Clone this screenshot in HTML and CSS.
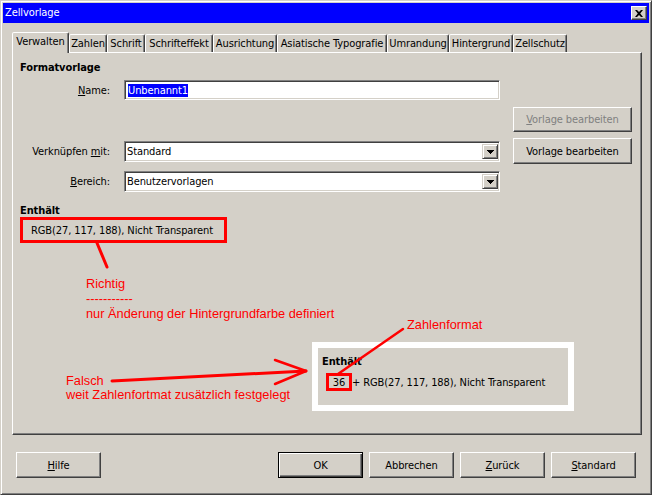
FILE: index.html
```html
<!DOCTYPE html>
<html lang="de">
<head>
<meta charset="utf-8">
<title>Zellvorlage</title>
<link rel="stylesheet" href="styles.css">
</head>
<body>
<div class="window">
  <div class="titlebar">
    <span class="title">Zellvorlage</span>
    <span class="close"><svg width="8" height="7" viewBox="0 0 8 7"><path d="M0 0h2l2 2 2-2h2L5.2 3.5 8 7H6L4 5 2 7H0l2.8-3.5z" fill="#000"/></svg></span>
  </div>
  <div class="tabs">
    <div class="tab active">Verwalten</div>
    <div class="tab">Zahlen</div>
    <div class="tab">Schrift</div>
    <div class="tab">Schrifteffekt</div>
    <div class="tab">Ausrichtung</div>
    <div class="tab">Asiatische Typografie</div>
    <div class="tab">Umrandung</div>
    <div class="tab">Hintergrund</div>
    <div class="tab">Zellschutz</div>
  </div>
  <div class="panel">
    <div class="heading">Formatvorlage</div>
    <div class="form">
      <div class="lbl row-name"><span><u>N</u>ame:</span></div>
      <div class="field row-name"><span class="sel">Unbenannt1</span></div>
      <button class="btn side disabled row-edit1"><u>V</u>orlage bearbeiten</button>
      <div class="lbl row-link"><span>Verknüpfen <u>m</u>it:</span></div>
      <div class="combo row-link"><span class="combo-text">Standard</span><span class="drop"><svg width="7" height="4" viewBox="0 0 7 4"><path d="M0 0h7v1h-1v1h-1v1h-1v1h-1v-1h-1v-1h-1v-1h-1z" fill="#000"/></svg></span></div>
      <button class="btn side row-edit2">Vorla<u>g</u>e bearbeiten</button>
      <div class="lbl row-area"><span><u>B</u>ereich:</span></div>
      <div class="combo row-area"><span class="combo-text">Benutzervorlagen</span><span class="drop"><svg width="7" height="4" viewBox="0 0 7 4"><path d="M0 0h7v1h-1v1h-1v1h-1v1h-1v-1h-1v-1h-1v-1h-1z" fill="#000"/></svg></span></div>
    </div>
    <div class="heading contains-h">Enthält</div>
    <div class="boxed">RGB(27, 117, 188), Nicht Transparent</div>
  </div>
  <div class="footer">
    <button class="btn wide first"><u>H</u>ilfe</button>
    <button class="btn wide default">OK</button>
    <button class="btn wide">Abbrechen</button>
    <button class="btn wide"><u>Z</u>urück</button>
    <button class="btn wide"><u>S</u>tandard</button>
  </div>
</div>
<div class="annot">
  <div class="note note-richtig">Richtig<br>-----------<br>nur Änderung der Hintergrundfarbe definiert</div>
  <div class="note note-zahlen">Zahlenformat</div>
  <div class="note note-falsch">Falsch<br>weit Zahlenfortmat zusätzlich festgelegt</div>
  <div class="callout">
    <div class="heading">Enthält</div>
    <div class="callout-row"><span class="numbox">36</span><span>+ RGB(27, 117, 188), Nicht Transparent</span></div>
  </div>
  <svg class="lines" width="652" height="495" viewBox="0 0 652 495">
    <g stroke="#ff0000" fill="none" stroke-linecap="round">
      <line x1="97" y1="243" x2="107" y2="267" stroke-width="3"/>
      <line x1="403" y1="329" x2="338" y2="374" stroke-width="2.5"/>
      <line x1="112" y1="381" x2="306" y2="371" stroke-width="3"/>
      <line x1="275" y1="360" x2="306" y2="371" stroke-width="2.5"/>
      <line x1="275" y1="384" x2="306" y2="371" stroke-width="2.5"/>
    </g>
  </svg>
</div>
</body>
</html>
```
FILE: styles.css
```css
* { box-sizing: border-box; }
html, body { margin: 0; padding: 0; }
body {
  width: 652px;
  height: 495px;
  background: #d4d0c8;
  font-family: "DejaVu Sans Condensed", "DejaVu Sans", sans-serif;
  font-size: 11px;
  letter-spacing: -0.1px;
  color: #000;
  position: relative;
  overflow: hidden;
}
.window {
  width: 652px;
  height: 495px;
  border: 1px solid;
  border-color: #d4d0c8 #404040 #404040 #d4d0c8;
  box-shadow: inset 1px 1px #fff, inset -1px -1px #808080;
  padding: 2px;
  display: flex;
  flex-direction: column;
}
.titlebar {
  height: 20px;
  flex: none;
  background: #0000ff;
  color: #fff;
  display: flex;
  align-items: center;
  justify-content: space-between;
  padding: 0 2px;
}
.title { line-height: 14px; }
.close {
  width: 16px;
  height: 14px;
  background: #d4d0c8;
  border: 1px solid;
  border-color: #fff #404040 #404040 #fff;
  box-shadow: inset -1px -1px #808080;
  display: flex;
  align-items: center;
  justify-content: center;
}
.close svg { display: block; }
.tabs {
  margin: 9px 0 0 9px;
  display: grid;
  grid-template-columns: 57px 38px 38px 68px 64px 110px 62px 64px 54px;
  height: 20px;
  align-items: end;
  position: relative;
  z-index: 1;
  flex: none;
}
.tab {
  height: 18px;
  border: 1px solid;
  border-bottom: none;
  border-color: #fff #404040 transparent #fff;
  box-shadow: inset -1px 0 #808080;
  border-radius: 2px 2px 0 0;
  padding-top: 2px;
  text-align: center;
  line-height: 14px;
  white-space: nowrap;
  background: #d4d0c8;
}
.tab.active {
  height: 21px;
  margin-bottom: -1px;
}
.panel {
  margin-left: 9px;
  width: 630px;
  height: 383px;
  flex: none;
  border: 1px solid;
  border-color: #fff #404040 #404040 #fff;
  box-shadow: inset -1px -1px #808080;
  padding: 9px 0 0 7px;
}
.heading { font-weight: bold; line-height: 12px; }
.form {
  margin-top: 6px;
  display: grid;
  grid-template-columns: 104px 376px 13px 119px;
  grid-template-rows: 20px 7px 25px 6px 26px 7px 21px;
}
.lbl {
  grid-column: 1;
  display: flex;
  align-items: center;
  justify-content: flex-end;
  padding-right: 14px;
  white-space: nowrap;
}
.row-name { grid-row: 1; }
.row-edit1 { grid-row: 3; }
.row-link { grid-row: 5; }
.row-edit2 { grid-row: 5; }
.row-area { grid-row: 7; }
.field, .combo {
  grid-column: 2;
  background: #fff;
  border: 1px solid;
  border-color: #808080 #fff #fff #808080;
  box-shadow: inset 1px 1px #404040, inset -1px -1px #d4d0c8;
  display: flex;
  align-items: center;
}
.field { padding-left: 3px; }
.sel { background: #0000ff; color: #fff; line-height: 13px; }
.combo { padding: 2px 1px 2px 2px; height: 21px; }
.combo.row-link { align-self: start; margin-top: 3px; }
.combo-text { flex: 1; }
.drop {
  width: 16px;
  align-self: stretch;
  background: #d4d0c8;
  border: 1px solid;
  border-color: #d4d0c8 #404040 #404040 #d4d0c8;
  box-shadow: inset 1px 1px #fff, inset -1px -1px #808080;
  display: flex;
  align-items: center;
  justify-content: center;
}
.drop svg { display: block; }
.btn {
  font: inherit;
  letter-spacing: inherit;
  color: #000;
  background: #d4d0c8;
  border: 1px solid;
  border-color: #fff #404040 #404040 #fff;
  box-shadow: inset -1px -1px #808080;
  padding: 0;
  margin: 0;
  white-space: nowrap;
}
.side { grid-column: 4; }
.disabled { color: #808080; }
.contains-h { margin-top: 13px; }
.boxed {
  width: 207px;
  height: 26px;
  border: 3px solid #ff0000;
  display: flex;
  align-items: center;
  padding-left: 8px;
  white-space: nowrap;
}
.footer {
  display: flex;
  margin-top: 17px;
  padding: 0 13px;
  gap: 6px;
  flex: none;
}
.btn.wide { width: 85px; height: 26px; }
.first { margin-right: auto; }
.btn.default {
  border: 1px solid #000;
  box-shadow: inset 1px 1px #fff, inset -1px -1px #404040, inset -2px -2px #808080;
}
.annot {
  position: absolute;
  left: 0;
  top: 0;
  width: 652px;
  height: 495px;
  pointer-events: none;
}
.note {
  position: absolute;
  color: #ff0000;
  font-family: "Liberation Sans", Arial, sans-serif;
  font-size: 12.8px;
  letter-spacing: 0;
  line-height: 15px;
  white-space: nowrap;
}
.note-richtig { left: 86px; top: 276px; }
.note-zahlen { left: 407px; top: 317px; }
.note-falsch { left: 66px; top: 374px; line-height: 14px; }
.callout {
  position: absolute;
  left: 312px;
  top: 342px;
  width: 262px;
  height: 69px;
  border: 6px solid #fff;
  background: #d4d0c8;
  padding: 8px 0 0 4px;
}
.callout-row {
  margin: 5px 0 0 4px;
  display: flex;
  align-items: center;
  white-space: nowrap;
}
.numbox {
  width: 26px;
  height: 18px;
  border: 3px solid #ff0000;
  display: flex;
  align-items: center;
  justify-content: center;
}
.lines { position: absolute; left: 0; top: 0; }
```
